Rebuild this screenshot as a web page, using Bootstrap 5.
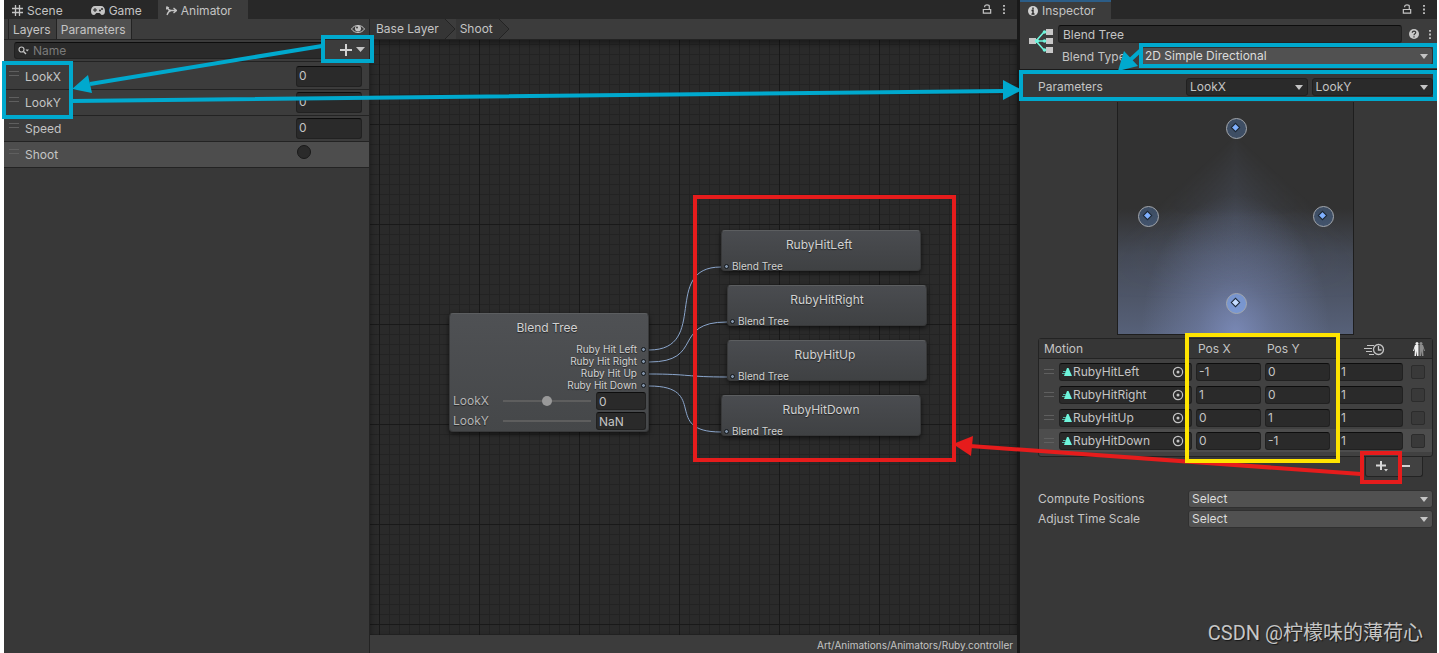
<!DOCTYPE html>
<html lang="en">
<head>
<meta charset="utf-8">
<meta name="viewport" content="width=device-width, initial-scale=1">
<title>Animator - Blend Tree</title>
<link href="https://cdn.jsdelivr.net/npm/bootstrap@5.3.0/dist/css/bootstrap.min.css" rel="stylesheet">
<style>
:root{--line:#232323;--panel:#383838;--bar:#3c3c3c;--field:#2a2a2a;--txt:#c4c4c4;
 --arrow:url("data:image/svg+xml,%3Csvg xmlns='http://www.w3.org/2000/svg' viewBox='0 0 8 5'%3E%3Cpath d='M0 0h8L4 5z' fill='%23c4c4c4'/%3E%3C/svg%3E")}
body{background:#fff;color:var(--txt);font:12px/16px Inter,"Noto Sans CJK SC",sans-serif;padding:0 2px 0 4px}
button{color:inherit;background:none;border:0;padding:0;line-height:16px}
svg{display:block;flex:none}
.editor{background:var(--panel)}
.tabs{background:#282828;height:19px}
.tab-tools{gap:10px;padding:4px 11px 0 0}
.dock-tab{height:19px;padding:2px 8px 0;display:flex;align-items:center;gap:4px}
.dock-tab.on{background:var(--bar)}
.tool-row{height:21px;background:var(--bar);border-bottom:1px solid var(--line)}
.sub-tab{height:20px;padding:2px 5px 0 4px;border-left:1px solid var(--line)}
.sub-tab.on{background:#505050;border-right:1px solid var(--line)}
.params{width:366px;border-right:1px solid var(--line)}
.fld,.fld:focus{background:var(--field);color:var(--txt);border:1px solid #212121;border-top-color:#0d0d0d;border-radius:3px;padding:0 2px;height:18px;line-height:16px;font-size:12px;min-height:0;box-shadow:none}
.fld::placeholder{color:#7a7a7a}
.find-row{height:22px;padding:2px 4px 0 10px;background:var(--bar);border-bottom:1px solid var(--line)}
.find{padding-left:18px;height:17px}
.find-icon{position:absolute;left:4px;top:4px}
.p-row{height:26px;background:var(--bar);border-bottom:1px solid var(--line);padding:0 7px 0 5px}
.p-row:first-child{height:28px;padding-top:2px}
.p-row.sel{background:#4d4d4d}
.p-row .fld{width:66px;height:21px;padding-bottom:2px}
.p-val{width:66px}
.grip{width:10px;height:5px;border:solid #5f5f5f;border-width:1px 0}
.p-row .grip{margin:0 6px 6px 0}
.trig{appearance:none;width:14px;height:14px;border-radius:50%;background:var(--field);border:1px solid #191919;margin:0 1px 5px}
.crumb{height:20px;padding:2px 0 0 6px;background:#353535}
.graph{position:relative;overflow:hidden;min-height:560px;background-color:#2a2a2a;
 background-image:linear-gradient(90deg,#191919 1px,transparent 1px),linear-gradient(#191919 1px,transparent 1px),linear-gradient(90deg,#232323 1px,transparent 1px),linear-gradient(#232323 1px,transparent 1px);
 background-size:100px 100px,100px 100px,10px 10px,10px 10px;background-position:9px 0,0 84px,9px 0,0 4px;box-shadow:inset 0 3px 6px #0006}
.status{height:18px;background:var(--bar);font-size:10px;line-height:18px;padding-right:4px;padding-top:1px}
.node{position:absolute;width:200px;height:41px;border-radius:4px;border:1px solid #38393a;border-top-color:#5c5e60;background:linear-gradient(#4a4c50,#3f4143);box-shadow:0 2px 5px #0009;text-shadow:0 1px 1px #0008;color:#d2d2d2}
.node-title{padding-top:6px;text-align:center}
.node-in{font-size:10px;line-height:12px;padding:7px 0 0 2px;gap:3px}
.root{height:119px;background:linear-gradient(#4f5154,#454749)}
.outs{padding-top:7px}
.node-out{font-size:10px;line-height:12px;padding-right:2px;gap:4px}
.dot{width:5px;height:5px;border-radius:50%;background:#8294aa;border:1px solid #101418;flex:none}
.n-row{height:20px;padding:0 2px 0 3px;color:#b5b5b5}
.n-row .fld{width:50px;margin-left:5px}
.knob{appearance:none;background:none;width:88px;height:16px;margin:0}
.knob::-webkit-slider-runnable-track{height:2px;background:#5e5e5e}
.knob::-webkit-slider-thumb{appearance:none;width:10px;height:10px;border-radius:50%;background:#999;margin-top:-4px}
.knob.bare::-webkit-slider-thumb{background:transparent}
.gutter{width:3px;background:#191919}
.inspector{width:417px}
.inspector .dock-tab{border-top:2px solid #2c5d87;padding-top:1px;padding-right:16px}
.head{background:var(--bar);height:51px;padding:6px 4px 0 9px;border-bottom:1px solid #1a1a1a}
.head-main{padding-left:5px}
.head-tools{gap:9px;padding:0 1px 0 7px}
.type-label{width:83px;padding:2px 0 0 4px;flex:none}
.type-row{padding-top:4px}
.drop,.drop:focus{height:18px;min-height:0;font-size:12px;line-height:16px;padding:0 18px 0 3px;color:#dcdcdc;border:1px solid #303030;border-radius:3px;background:#515151 var(--arrow) right 4px center/8px 5px no-repeat;box-shadow:none}
.drop.dark{background-color:var(--field);color:var(--txt);border-color:#202020}
.body-pad{padding:0 4px 0 18px}
.par-row{padding:8px 0 6px;gap:3px}
.par-label{width:145px;padding-top:1px}
.blend{width:237px;height:233px;border:1px solid #1e1e1e;border-top:0;position:relative;
 background:radial-gradient(ellipse 40% 60% at 50% 100%,#8d9fd8a0,#8d9fd850 40%,transparent),linear-gradient(transparent 46%,#6f80a84d 66%,#6f80a899),#323232}
.blend::before{content:"";position:absolute;inset:0;background:conic-gradient(from 132deg at 50% 14%,transparent,#6f80a83d 48deg,transparent 96deg);mask:linear-gradient(transparent 12%,#000 50%,transparent 85%);-webkit-mask:linear-gradient(transparent 12%,#000 50%,transparent 85%)}
.pin{position:absolute;width:21px;height:21px;border:1px solid #a3a7ad;border-radius:50%;background:#4f78b066;display:grid;place-items:center;padding:0 3px 2px 0}
.pin i{width:5px;height:5px;background:#7fb0ff;transform:rotate(45deg);outline:1px solid #1c2836}
.pin.hot{background:#7fa5e8aa}
.pin.hot i{background:#c5dcff}
.motions{border:1px solid var(--line);border-radius:3px;background:#414141;padding-bottom:4px;margin-top:3px}
.motions table{table-layout:fixed;width:100%;border-collapse:collapse}
.motions th{font-weight:400;height:19px;padding:2px 2px 0;background:#363636;border-bottom:1px solid var(--line)}
.motions th:first-child{padding-left:5px}
.motions td{height:23px;padding:0 4px 0 0}
.motions tbody tr:first-child td{height:25px;padding-top:2px}
.motions tr.sel{background:#4d4d4d}
.motions .grip{margin-left:5px}
.motions .fld{width:100%}
.clip{gap:1px}
.clip button{padding-right:5px}
.tick{appearance:none;display:block;width:14px;height:14px;margin:0 0 0 4px;background:#393939;border:1px solid #2c2c2c;border-radius:2px}
.foot{width:58px;height:20px;margin-right:10px;padding:0 12px 2px 10px;background:#414141;border:1px solid var(--line);border-top:0;border-radius:0 0 3px 3px}
.picks{padding-top:13px}
.pick{height:20px}
.pick label{width:150px;padding-top:1px}
.marks{position:absolute;left:0;top:0;width:1439px;height:653px;pointer-events:none;overflow:visible}
.stamp{position:absolute;right:16px;bottom:6px;font:20px/28px Roboto,"Noto Sans CJK SC",sans-serif;color:#c6c6c6;text-shadow:1px 1px 1px #0009}
</style>
</head>
<body class="position-relative overflow-x-hidden">
<svg width="0" height="0" class="position-absolute" aria-hidden="true">
<defs>
<symbol id="lock" viewBox="0 0 10 12"><path d="M1 6h8v4H1zM2.500 3.500V2.500C2.500 .5 7.500 .5 7.500 2.500V6" fill="none" stroke="#c4c4c4" stroke-width="1.300"/></symbol>
<symbol id="more" viewBox="0 0 4 12"><path d="M1 1h2v2H1zM1 5h2v2H1zM1 9h2v2H1z" fill="#c4c4c4"/></symbol>
<symbol id="clip" viewBox="0 0 10 8"><path d="M5 0h1.500L10 8H2z" fill="#6ff5dc"/><path d="M1 3.500h3M0 5.500h3" stroke="#4fb5a5"/></symbol>
<symbol id="target" viewBox="0 0 12 12"><circle cx="6" cy="6" r="4.600" fill="none" stroke="#c4c4c4" stroke-width="1.200"/><circle cx="6" cy="6" r="1.500" fill="#c4c4c4"/></symbol>
</defs>
</svg>
<main class="editor d-flex min-vh-100">
<section class="d-flex flex-column flex-grow-1">
 <div class="tabs d-flex align-items-start">
  <button class="dock-tab"><svg width="11" height="11" viewBox="0 0 11 11" stroke="#c4c4c4" stroke-width="1.300"><path d="M3.500 0v11M7.500 0v11M0 3.500h11M0 7.500h11"/></svg>Scene</button>
  <button class="dock-tab ms-2 ps-2"><svg class="ms-1" width="14" height="9" viewBox="0 0 14 9"><path d="M4 0h6c2.500 0 4 2 4 5s-1.500 4-3 4c-1 0-1.500-1.500-2.500-2h-3C4.500 7.500 4 9 3 9 1.500 9 0 8 0 5s1.500-5 4-5z" fill="#c4c4c4"/><path d="M4 2v4M2 4h4" stroke="#282828"/><circle cx="9" cy="4.500" r="1" fill="#282828"/><circle cx="11" cy="3" r="1" fill="#282828"/></svg>Game</button>
  <button class="dock-tab on ms-2 px-3 ps-2"><svg width="11" height="10" viewBox="0 0 11 10" fill="none" stroke="#c4c4c4" stroke-width="1.300"><path d="M1 1c1 3 2 3.500 4 3.500h5M1 9c1-3 2-4 4-4.500M7.500 2 10.500 4.500 7.500 7M0 3.500 1 1l2 1"/></svg>Animator</button>
  <div class="ms-auto d-flex tab-tools"><button aria-label="Lock"><svg width="10" height="11"><use href="#lock"/></svg></button><button aria-label="Menu"><svg width="4" height="11"><use href="#more"/></svg></button></div>
 </div>
 <div class="d-flex flex-grow-1">
  <aside class="params flex-shrink-0">
   <div class="tool-row d-flex ps-1"><button class="sub-tab">Layers</button><button class="sub-tab on">Parameters</button>
    <button class="ms-auto me-1" aria-label="Show"><svg width="14" height="10" viewBox="0 0 14 10"><path d="M.5 5C3.500.3 10.500.3 13.500 5 10.500 9.700 3.500 9.700.5 5z" fill="none" stroke="#c4c4c4"/><circle cx="7" cy="4.500" r="3" fill="#c4c4c4"/><circle cx="6" cy="3.500" r="1" fill="#3c3c3c"/></svg></button></div>
   <div class="find-row d-flex">
    <label class="position-relative flex-grow-1"><svg class="find-icon" width="11" height="9" viewBox="0 0 11 9"><circle cx="3.500" cy="3.500" r="2.500" fill="none" stroke="#c4c4c4" stroke-width="1.200"/><path d="M5.500 5.500 8 8" stroke="#c4c4c4" stroke-width="1.400"/><path d="M7.500 3.500h3.500L9.200 5.500z" fill="#c4c4c4"/></svg><input class="form-control fld find" placeholder="Name" aria-label="Name"></label>
    <button class="d-flex align-items-center gap-1 ms-3 pb-1" aria-label="Add parameter"><svg width="12" height="12" stroke="#d2d2d2" stroke-width="2"><path d="M6 0v12M0 6h12"/></svg><svg width="9" height="5"><path d="M0 0h9L4.500 5z" fill="#c4c4c4"/></svg></button>
   </div>
   <div>
    <div class="p-row d-flex align-items-center"><span class="grip"></span><label for="lx">LookX</label><input id="lx" class="form-control fld ms-auto" value="0"></div>
    <div class="p-row d-flex align-items-center"><span class="grip"></span><label for="ly">LookY</label><input id="ly" class="form-control fld ms-auto" value="0"></div>
    <div class="p-row d-flex align-items-center"><span class="grip"></span><label for="sp">Speed</label><input id="sp" class="form-control fld ms-auto" value="0"></div>
    <div class="p-row sel d-flex align-items-center"><span class="grip"></span><label for="sh">Shoot</label><span class="p-val ms-auto d-flex"><input id="sh" type="radio" class="trig"></span></div>
   </div>
  </aside>
  <div class="d-flex flex-column flex-grow-1">
   <nav class="tool-row d-flex" aria-label="Layer path">
    <span class="crumb">Base Layer</span><svg width="17" height="20"><path d="M0 0h6l10 10L6 20H0z" fill="#353535"/><path d="M6 0l10 10L6 20" fill="none" stroke="#232323"/></svg><span class="crumb ps-1">Shoot</span><svg width="17" height="20"><path d="M0 0h6l10 10L6 20H0z" fill="#353535"/><path d="M6 0l10 10L6 20" fill="none" stroke="#232323"/></svg>
   </nav>
   <div class="graph flex-grow-1">
    <svg class="position-absolute top-0 start-0" width="600" height="500" fill="none" stroke="#8ba6cc"><path d="M279 310C340 310 291 227 351 227M279 322C335 322 301 282 357 282M279 334C320 334 316 337 357 337M279 346C340 346 291 392 351 392"/></svg>
    <div class="node root" style="left:79px;top:273px">
     <div class="node-title pe-1">Blend Tree</div>
     <div class="outs">
      <div class="node-out d-flex justify-content-end align-items-center">Ruby Hit Left<span class="dot"></span></div>
      <div class="node-out d-flex justify-content-end align-items-center">Ruby Hit Right<span class="dot"></span></div>
      <div class="node-out d-flex justify-content-end align-items-center">Ruby Hit Up<span class="dot"></span></div>
      <div class="node-out d-flex justify-content-end align-items-center">Ruby Hit Down<span class="dot"></span></div>
     </div>
     <div class="n-row d-flex align-items-center"><label for="nx" class="me-auto">LookX</label><input type="range" class="knob" aria-label="LookX slider"><input id="nx" class="form-control fld" value="0"></div>
     <div class="n-row d-flex align-items-center"><label for="ny" class="me-auto">LookY</label><input type="range" class="knob bare" aria-label="LookY slider"><input id="ny" class="form-control fld" value="NaN"></div>
    </div>
    <div class="node" style="left:351px;top:190px"><div class="node-title pe-1">RubyHitLeft</div><div class="node-in d-flex align-items-center"><span class="dot"></span>Blend Tree</div></div>
    <div class="node" style="left:357px;top:245px"><div class="node-title">RubyHitRight</div><div class="node-in d-flex align-items-center"><span class="dot"></span>Blend Tree</div></div>
    <div class="node" style="left:357px;top:300px"><div class="node-title pe-1">RubyHitUp</div><div class="node-in d-flex align-items-center"><span class="dot"></span>Blend Tree</div></div>
    <div class="node" style="left:351px;top:355px"><div class="node-title">RubyHitDown</div><div class="node-in d-flex align-items-center"><span class="dot"></span>Blend Tree</div></div>
   </div>
   <div class="status text-end">Art/Animations/Animators/Ruby.controller</div>
  </div>
 </div>
</section>
<div class="gutter flex-shrink-0"></div>
<aside class="inspector flex-shrink-0">
 <div class="tabs d-flex align-items-start">
  <button class="dock-tab on"><svg width="10" height="10"><circle cx="5" cy="5" r="5" fill="#d2d2d2"/><path d="M5 1.500v2M3.500 4.500H5V8M3.500 8h3" stroke="#282828" stroke-width="1.400" fill="none"/></svg>Inspector</button>
  <div class="ms-auto d-flex tab-tools"><button aria-label="Lock"><svg width="10" height="11"><use href="#lock"/></svg></button><button aria-label="Menu"><svg width="4" height="11"><use href="#more"/></svg></button></div>
 </div>
 <div class="head d-flex">
  <svg class="mt-1" width="24" height="24"><g fill="#c8c8c8"><path d="M0 9h7v6H0zM17 0h7v6h-7zM17 9h7v6h-7zM17 18h7v6h-7z"/></g><path d="M15 3 7 12l8 9M7 12h9" stroke="#6ff5dc" stroke-width="1.600" fill="none"/><g fill="#6ff5dc"><circle cx="15.500" cy="3" r="1.800"/><circle cx="15.500" cy="12" r="1.800"/><circle cx="15.500" cy="21" r="1.800"/><circle cx="8" cy="12" r="2"/></g></svg>
  <div class="flex-grow-1 head-main">
   <div class="d-flex align-items-center"><input class="form-control fld ps-1" value="Blend Tree" aria-label="Name">
    <div class="d-flex head-tools"><button aria-label="Help"><svg width="10" height="10"><circle cx="5" cy="5" r="5" fill="#c8c8c8"/><path d="M3.300 3.800C3.300 1.500 6.800 1.700 6.700 3.700 6.600 4.900 5 4.800 5 6.300M5 7.200v1.300" stroke="#333" stroke-width="1.200" fill="none"/></svg></button><button aria-label="Options"><svg width="4" height="11"><use href="#more"/></svg></button></div></div>
   <div class="d-flex type-row"><label for="bt" class="type-label">Blend Type</label><select id="bt" class="form-select drop"><option>2D Simple Directional</option></select></div>
  </div>
 </div>
 <div class="body-pad">
  <div class="d-flex par-row"><span class="par-label flex-shrink-0" id="pl">Parameters</span>
   <div class="d-flex flex-grow-1 gap-1" role="group" aria-labelledby="pl"><select class="form-select drop dark" aria-label="Parameter X"><option>LookX</option></select><select class="form-select drop dark" aria-label="Parameter Y"><option>LookY</option></select></div></div>
  <div class="blend mx-auto">
   <span class="pin" style="left:108px;top:16px"><i></i></span><span class="pin" style="left:20px;top:104px"><i></i></span><span class="pin" style="left:195px;top:104px"><i></i></span><span class="pin hot" style="left:108px;top:191px"><i></i></span>
  </div>
  <div class="motions">
   <table>
    <colgroup><col style="width:20px"><col style="width:137px"><col style="width:69px"><col style="width:73px"><col style="width:69px"><col></colgroup>
    <thead><tr><th colspan="2">Motion</th><th>Pos X</th><th>Pos Y</th>
     <th><svg class="ms-4" width="21" height="13" fill="none" stroke="#c4c4c4"><path d="M3 2.500h7M0 5.500h8M2 8.500h6M5 11.500h5"/><circle cx="14.500" cy="6.500" r="5" stroke-width="1.300"/><path d="M14.500 3v4H17.500" stroke-width="1.300"/></svg></th>
     <th><svg class="ms-1" width="12" height="14"><circle cx="4" cy="1.500" r="1.500" fill="#f0f0f0"/><circle cx="8" cy="1.500" r="1.500" fill="#8c8c8c"/><path d="M5.500 3v11H4V9L3 14H1.500L2 6 1 9H0L2 3z" fill="#f0f0f0"/><path d="M6.500 3v11H8V9l1 5h1.500L10 6l1 3h1L10 3z" fill="#8c8c8c"/></svg></th></tr></thead>
    <tbody id="rows"></tbody>
   </table>
  </div>
  <div class="foot ms-auto d-flex align-items-center justify-content-between"><button aria-label="Add motion"><svg width="13" height="12"><path d="M5 1v9M0 5.500h10" stroke="#d8d8d8" stroke-width="2"/><path d="M8 9h4l-2 2.500z" fill="#d2d2d2"/></svg></button><button aria-label="Remove motion"><svg width="8" height="2"><path d="M0 0h8v2H0z" fill="#d2d2d2"/></svg></button></div>
  <div class="picks">
   <div class="pick d-flex"><label for="cp">Compute Positions</label><select id="cp" class="form-select drop flex-fill w-auto"><option>Select</option></select></div>
   <div class="pick d-flex"><label for="at">Adjust Time Scale</label><select id="at" class="form-select drop flex-fill w-auto"><option>Select</option></select></div>
  </div>
 </div>
</aside>
</main>
<svg class="marks" viewBox="0 0 1439 653" fill="none" stroke-width="4" aria-hidden="true">
 <g stroke="#00a9ce"><path d="M323 37h49v24h-49zM4 63h67v54H4zM1141 45h294v21h-294zM1021 72h414v27H1021z"/><path d="M322 46 90 84M72 101 1004 91M1141 50 1129 61"/></g>
 <path d="M72 89 88 75 92 93zM1022 90 1003 80V100zM1118 71 1124 51 1138 66z" fill="#00a9ce"/>
 <g stroke="#e61c1c"><path d="M695 197h259v263H695zM1362 453h38v29h-38z"/><path d="M1361 474 970 446"/></g><path d="M953 444 973 436 971 456z" fill="#e61c1c"/>
 <path d="M1187 335h151v126h-151z" stroke="#ffe400"/>
</svg>
<div class="stamp">CSDN @柠檬味的薄荷心</div>
<script>
const motions=[["RubyHitLeft","-1","0"],["RubyHitRight","1","0"],["RubyHitUp","0","1"],["RubyHitDown","0","-1"]];
document.getElementById("rows").innerHTML=motions.map(([n,x,y],i)=>`<tr class="${i===3?"sel":""}"><td><div class="grip"></div></td>
<td><div class="fld clip d-flex align-items-center"><svg width="10" height="8"><use href="#clip"/></svg>${n}<button class="ms-auto" aria-label="Pick ${n}"><svg width="12" height="12"><use href="#target"/></svg></button></div></td>
<td><input class="form-control fld" value="${x}" aria-label="${n} Pos X"></td><td class="pe-2"><input class="form-control fld" value="${y}" aria-label="${n} Pos Y"></td>
<td><input class="form-control fld" value="1" aria-label="${n} speed"></td><td><input type="checkbox" class="tick" aria-label="${n} mirror"></td></tr>`).join("");
</script>
<script src="https://cdn.jsdelivr.net/npm/bootstrap@5.3.0/dist/js/bootstrap.bundle.min.js"></script>
</body>
</html>
